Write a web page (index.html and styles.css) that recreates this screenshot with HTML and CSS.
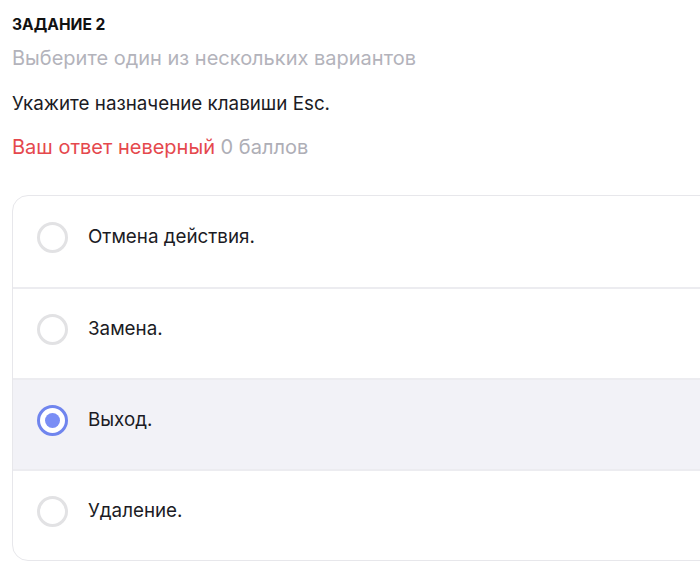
FILE: index.html
```html
<!DOCTYPE html>
<html lang="ru">
<head>
<meta charset="utf-8">
<link rel="stylesheet" href="styles.css">
</head>
<body>
<div class="page">
  <div class="task-label">ЗАДАНИЕ 2</div>
  <div class="task-hint">Выберите один из нескольких вариантов</div>
  <div class="question">Укажите назначение клавиши Esc.</div>
  <div class="result"><span class="wrong">Ваш ответ неверный</span> <span class="score">0 баллов</span></div>
  <div class="options">
    <div class="option"><span class="radio"></span><span class="opt-text">Отмена действия.</span></div>
    <div class="option"><span class="radio"></span><span class="opt-text">Замена.</span></div>
    <div class="option selected"><span class="radio"></span><span class="opt-text">Выход.</span></div>
    <div class="option"><span class="radio"></span><span class="opt-text">Удаление.</span></div>
  </div>
</div>
</body>
</html>
```
FILE: styles.css
```css
html, body {
  margin: 0;
  padding: 0;
  background: #ffffff;
  overflow: hidden;
}
body {
  font-family: Inter, "Noto Sans", sans-serif;
  color: #1b1b24;
}
.page {
  padding: 16px 0 0 12px;
}
.task-label {
  font-size: 15.6px;
  font-weight: 700;
  line-height: 18px;
  color: #111;
}
.task-hint {
  margin-top: 12px;
  font-size: 20px;
  line-height: 24px;
  color: #b3b3bb;
}
.question {
  margin-top: 23px;
  font-size: 18.8px;
  line-height: 22px;
  color: #1b1b24;
}
.result {
  margin-top: 20px;
  font-size: 20px;
  line-height: 24px;
}
.wrong { color: #e5484d; }
.score { color: #aeaeb6; }
.options {
  margin-top: 36px;
  margin-right: -30px;
  border: 1px solid #e7e7eb;
  border-radius: 16px;
  overflow: hidden;
}
.option {
  height: 91px;
  display: flex;
  align-items: center;
  gap: 20px;
  padding: 0 0 9px 24px;
  border-top: 2px solid #ececf0;
  box-sizing: border-box;
}
.option:first-child {
  border-top: none;
}
.option.selected {
  background: #f2f2f7;
}
.radio {
  width: 31px;
  height: 31px;
  box-sizing: border-box;
  border-radius: 50%;
  border: 3px solid #e2e2e4;
  background: #fff;
  display: flex;
  align-items: center;
  justify-content: center;
  flex: none;
}
.option.selected .radio {
  border-color: #7085ee;
}
.option.selected .radio::after {
  content: "";
  width: 15px;
  height: 15px;
  border-radius: 50%;
  background: #7a8ef5;
}
.opt-text {
  font-size: 18.8px;
  line-height: 22px;
  color: #1b1b24;
}
```
